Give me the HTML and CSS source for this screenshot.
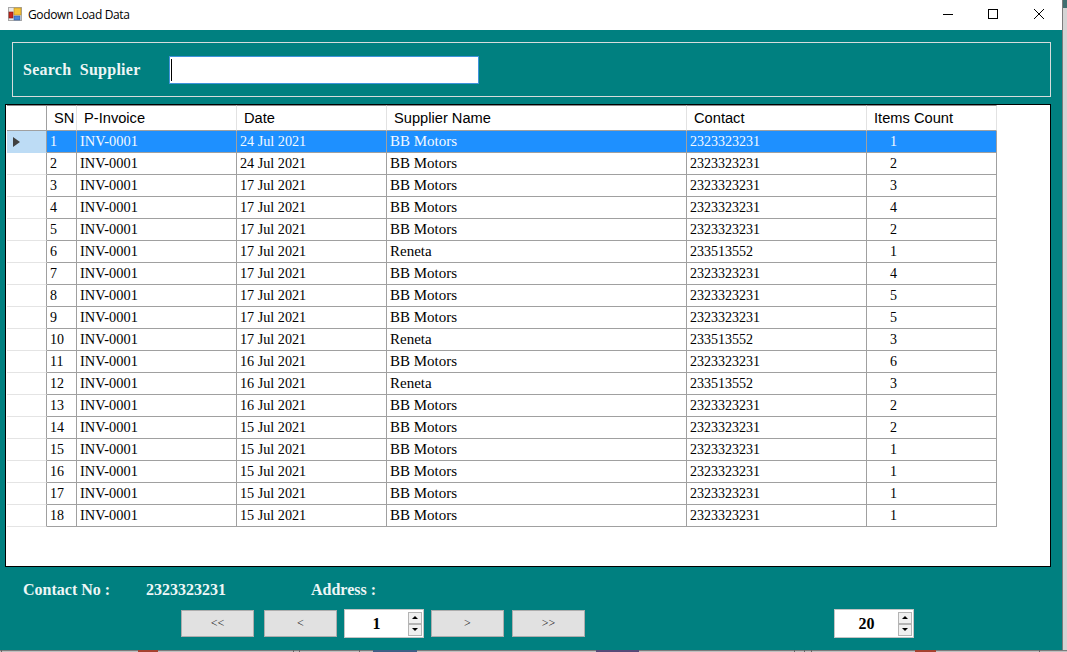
FILE: index.html
```html
<!DOCTYPE html>
<html lang="en">
<head>
<meta charset="utf-8">
<title>Godown Load Data</title>
<link rel="stylesheet" href="styles.css">
</head>
<body>
<div class="screen">
  <div class="window">
    <header class="titlebar">
      <svg class="appicon" width="14" height="14" viewBox="0 0 14 14">
        <rect x="0.5" y="0.5" width="13" height="13" fill="#e8e8e8" stroke="#a8a8a8"/>
        <rect x="6" y="1" width="7" height="7" fill="#f5c33b" stroke="#b98a1c" stroke-width="0.6"/>
        <rect x="1" y="5" width="4" height="6" fill="#c8281e" stroke="#7d1a12" stroke-width="0.6"/>
        <rect x="6" y="9" width="6" height="4" fill="#4a86dc" stroke="#2c5aa0" stroke-width="0.6"/>
      </svg>
      <span class="title">Godown Load Data</span>
      <div class="winbtns">
        <svg class="winbtn btn-min" width="10" height="10" viewBox="0 0 10 10"><path d="M0 5.5H10" stroke="#000" fill="none"/></svg>
        <svg class="winbtn btn-max" width="10" height="10" viewBox="0 0 10 10"><rect x="0.5" y="0.5" width="9" height="9" stroke="#000" fill="none"/></svg>
        <svg class="winbtn btn-close" width="10" height="10" viewBox="0 0 10 10"><path d="M0 0L10 10M10 0L0 10" stroke="#000" fill="none"/></svg>
      </div>
    </header>

    <main class="body">
      <section class="searchbox">
        <label class="searchlabel">Search&nbsp; Supplier</label>
        <div class="searchinput"><span class="caret"></span></div>
      </section>

      <section class="grid">
        <table class="table">
          <colgroup>
            <col class="c-head"><col class="c-sn"><col class="c-inv"><col class="c-date"><col class="c-sup"><col class="c-con"><col class="c-cnt">
          </colgroup>
          <thead>
            <tr><th class="corner"></th><th>SN</th><th>P-Invoice</th><th>Date</th><th>Supplier Name</th><th>Contact</th><th>Items Count</th></tr>
          </thead>
          <tbody>
            <tr class="selected"><td class="rowhead"><svg class="pointer" width="7" height="10" viewBox="0 0 7 10"><path d="M0 0L7 5L0 10Z" fill="#404040"/></svg></td><td>1</td><td>INV-0001</td><td>24 Jul 2021</td><td>BB Motors</td><td>2323323231</td><td class="count">1</td></tr>
            <tr><td class="rowhead"></td><td>2</td><td>INV-0001</td><td>24 Jul 2021</td><td>BB Motors</td><td>2323323231</td><td class="count">2</td></tr>
            <tr><td class="rowhead"></td><td>3</td><td>INV-0001</td><td>17 Jul 2021</td><td>BB Motors</td><td>2323323231</td><td class="count">3</td></tr>
            <tr><td class="rowhead"></td><td>4</td><td>INV-0001</td><td>17 Jul 2021</td><td>BB Motors</td><td>2323323231</td><td class="count">4</td></tr>
            <tr><td class="rowhead"></td><td>5</td><td>INV-0001</td><td>17 Jul 2021</td><td>BB Motors</td><td>2323323231</td><td class="count">2</td></tr>
            <tr><td class="rowhead"></td><td>6</td><td>INV-0001</td><td>17 Jul 2021</td><td>Reneta</td><td>233513552</td><td class="count">1</td></tr>
            <tr><td class="rowhead"></td><td>7</td><td>INV-0001</td><td>17 Jul 2021</td><td>BB Motors</td><td>2323323231</td><td class="count">4</td></tr>
            <tr><td class="rowhead"></td><td>8</td><td>INV-0001</td><td>17 Jul 2021</td><td>BB Motors</td><td>2323323231</td><td class="count">5</td></tr>
            <tr><td class="rowhead"></td><td>9</td><td>INV-0001</td><td>17 Jul 2021</td><td>BB Motors</td><td>2323323231</td><td class="count">5</td></tr>
            <tr><td class="rowhead"></td><td>10</td><td>INV-0001</td><td>17 Jul 2021</td><td>Reneta</td><td>233513552</td><td class="count">3</td></tr>
            <tr><td class="rowhead"></td><td>11</td><td>INV-0001</td><td>16 Jul 2021</td><td>BB Motors</td><td>2323323231</td><td class="count">6</td></tr>
            <tr><td class="rowhead"></td><td>12</td><td>INV-0001</td><td>16 Jul 2021</td><td>Reneta</td><td>233513552</td><td class="count">3</td></tr>
            <tr><td class="rowhead"></td><td>13</td><td>INV-0001</td><td>16 Jul 2021</td><td>BB Motors</td><td>2323323231</td><td class="count">2</td></tr>
            <tr><td class="rowhead"></td><td>14</td><td>INV-0001</td><td>15 Jul 2021</td><td>BB Motors</td><td>2323323231</td><td class="count">2</td></tr>
            <tr><td class="rowhead"></td><td>15</td><td>INV-0001</td><td>15 Jul 2021</td><td>BB Motors</td><td>2323323231</td><td class="count">1</td></tr>
            <tr><td class="rowhead"></td><td>16</td><td>INV-0001</td><td>15 Jul 2021</td><td>BB Motors</td><td>2323323231</td><td class="count">1</td></tr>
            <tr><td class="rowhead"></td><td>17</td><td>INV-0001</td><td>15 Jul 2021</td><td>BB Motors</td><td>2323323231</td><td class="count">1</td></tr>
            <tr><td class="rowhead"></td><td>18</td><td>INV-0001</td><td>15 Jul 2021</td><td>BB Motors</td><td>2323323231</td><td class="count">1</td></tr>
          </tbody>
        </table>
      </section>

      <section class="details">
        <span class="d-contact">Contact No :</span>
        <span class="d-value">2323323231</span>
        <span class="d-address">Address :</span>
      </section>

      <section class="pager">
        <button class="pbtn">&lt;&lt;</button>
        <button class="pbtn pbtn-prev">&lt;</button>
        <div class="spin spin-page">
          <span class="spinval">1</span>
          <div class="spinbtns">
            <span class="spinbtn"><svg width="6" height="3" viewBox="0 0 6 3"><path d="M3 0L6 3H0Z" fill="#000"/></svg></span>
            <span class="spinbtn"><svg width="6" height="3" viewBox="0 0 6 3"><path d="M0 0H6L3 3Z" fill="#000"/></svg></span>
          </div>
        </div>
        <button class="pbtn pbtn-next">&gt;</button>
        <button class="pbtn pbtn-last">&gt;&gt;</button>
        <div class="spin spin-size">
          <span class="spinval">20</span>
          <div class="spinbtns">
            <span class="spinbtn"><svg width="6" height="3" viewBox="0 0 6 3"><path d="M3 0L6 3H0Z" fill="#000"/></svg></span>
            <span class="spinbtn"><svg width="6" height="3" viewBox="0 0 6 3"><path d="M0 0H6L3 3Z" fill="#000"/></svg></span>
          </div>
        </div>
      </section>
    </main>
  </div>
  <aside class="sidestrip"><div class="sidetop"></div></aside>
</div>
<div class="bottomstrip">
  <span class="seg seg-gap1"></span><span class="seg tick"></span><span class="seg seg-a"></span><span class="seg seg-red"></span><span class="seg seg-b"></span><span class="seg tick"></span><span class="seg seg-t1"></span><span class="seg tick"></span><span class="seg seg-t2"></span><span class="seg tick"></span><span class="seg seg-t3"></span><span class="seg seg-blue"></span><span class="seg seg-c"></span><span class="seg seg-purple"></span><span class="seg seg-d"></span><span class="seg tick"></span><span class="seg seg-t4"></span><span class="seg tick"></span><span class="seg seg-t5"></span><span class="seg tick"></span><span class="seg seg-t6"></span><span class="seg seg-red2"></span><span class="seg seg-t7"></span><span class="seg tick"></span>
</div>
</body>
</html>
```

FILE: styles.css
```css
* { box-sizing: border-box; }
html, body { margin: 0; padding: 0; }
body {
  width: 1067px;
  height: 652px;
  overflow: hidden;
  background: #d4d4d4;
  display: flex;
  flex-direction: column;
}
.screen { display: flex; height: 650px; flex: none; }
.window {
  width: 1063px;
  height: 650px;
  display: flex;
  flex-direction: column;
  border-right: 1px solid #7c7c7c;
}
.titlebar {
  height: 30px;
  flex: none;
  background: #fff;
  display: flex;
  align-items: center;
  padding-left: 8px;
}
.appicon { margin-top: -2px; }
.title {
  margin-left: 6px;
  font: 12px "Open Sans", "Noto Sans", sans-serif;
  color: #000;
  position: relative;
  top: -1px;
  letter-spacing: -0.35px;
}
.winbtns { margin-left: auto; display: flex; margin-top: -2px; }
.winbtn { display: block; }
.btn-max { margin-left: 35px; }
.btn-close { margin-left: 36px; margin-right: 18px; }

.body {
  flex: 1;
  background: #008080;
  padding-top: 12px;
  display: flex;
  flex-direction: column;
}
.searchbox {
  margin-left: 12px;
  width: 1039px;
  height: 55px;
  border: 1px solid #d6dcdc;
  display: flex;
  align-items: center;
  padding-left: 10px;
}
.searchlabel {
  width: 146px;
  padding-top: 1px;
  font: bold 16px "Liberation Serif", serif;
  color: #eef6f6;
  letter-spacing: 0.25px;
  white-space: nowrap;
}
.searchinput {
  width: 310px;
  height: 28px;
  background: #fff;
  border: 1px solid #3f93dc;
  padding: 2px 0 0 1px;
}
.caret { display: block; width: 1px; height: 22px; background: #000; }

.grid {
  margin: 7px 0 0 5px;
  width: 1046px;
  height: 463px;
  flex: none;
  background: #fff;
  border: 1px solid #000;
  padding-left: 1px;
}
.table {
  border-collapse: separate;
  border-spacing: 0;
  table-layout: fixed;
  width: 990px;
}
.c-head { width: 40px; }
.c-sn { width: 30px; }
.c-inv { width: 160px; }
.c-date { width: 150px; }
.c-sup { width: 300px; }
.c-con { width: 180px; }
.c-cnt { width: 130px; }
th {
  height: 26px;
  padding: 0 0 0 7px;
  text-align: left;
  font: normal 14.67px "Liberation Sans", sans-serif;
  color: #000;
  background: #fff;
  border-top: 1px solid #8c8c8c;
  border-right: 1px solid #e2e2e2;
  border-bottom: 1px solid #a0a0a0;
  white-space: nowrap;
  overflow: hidden;
}
th.corner { border-right-color: #a0a0a0; }
td {
  height: 22px;
  padding: 0 0 0 3px;
  font: 14px "Liberation Serif", serif;
  color: #000;
  border-right: 1px solid #a0a0a0;
  border-bottom: 1px solid #a0a0a0;
  white-space: nowrap;
  overflow: hidden;
}
td:nth-child(3) { font-size: 14.4px; }
td:nth-child(4) { font-size: 14.2px; }
td:nth-child(5) { font-size: 15px; }
td.rowhead { padding: 0 0 0 6px; border-bottom-color: #e4e4e4; line-height: 0; }
td.count { padding-left: 23px; }
.selected td { background: #1e90ff; color: #f4faff; }
.selected td.rowhead { background: #bddcf5; border-bottom-color: #bddcf5; }
.pointer { display: block; }

.details {
  height: 42px;
  flex: none;
  display: flex;
  align-items: center;
  padding-top: 4px;
  font: bold 16px "Liberation Serif", serif;
  color: #eef6f6;
}
.d-contact { margin-left: 23px; width: 123px; }
.d-value { width: 165px; }

.pager { display: flex; align-items: center; height: 29px; flex: none; padding-left: 181px; }
.pbtn {
  width: 73px;
  height: 27px;
  padding: 0;
  background: #e1e1e1;
  border: 1px solid #adadad;
  border-radius: 0;
  font: 12px "Liberation Serif", serif;
  color: #111;
}
.pbtn-prev { margin-left: 10px; }
.pbtn-next { margin-left: 7px; }
.pbtn-last { margin-left: 8px; }
.spin {
  width: 80px;
  height: 29px;
  margin-left: 7px;
  background: #fff;
  border: 1px solid #c4c4c4;
  display: flex;
  align-items: center;
}
.spin-size { margin-left: 249px; }
.spinval {
  width: 63px;
  text-align: center;
  font: bold 16px "Liberation Serif", serif;
  color: #000;
}
.spinbtns { display: flex; flex-direction: column; width: 14px; }
.spinbtn {
  height: 12px;
  background: #f0f0f0;
  border: 1px solid #b4b4b4;
  display: flex;
  align-items: center;
  justify-content: center;
}

.sidestrip { flex: 1; background: #d4d4d4; }
.sidetop { height: 8px; background: #3f6f70; }

.bottomstrip { height: 2px; flex: none; display: flex; background: #c0c0c0; border-top: 1px solid #7c7c7c; }
.seg { display: block; height: 2px; margin-top: -1px; }
.tick { width: 1px; background: #666; }
.seg-gap1 { width: 1px; }
.seg-a { width: 136px; }
.seg-red { width: 20px; background: #a5422f; }
.seg-b { width: 135px; }
.seg-t1 { width: 5px; }
.seg-t2 { width: 59px; }
.seg-t3 { width: 13px; }
.seg-blue { width: 44px; background: #3f5f86; }
.seg-c { width: 179px; }
.seg-purple { width: 43px; background: #574a78; }
.seg-d { width: 155px; }
.seg-t4 { width: 9px; }
.seg-t5 { width: 6px; }
.seg-t6 { width: 103px; }
.seg-red2 { width: 21px; background: #a5422f; }
.seg-t7 { width: 103px; }
```
